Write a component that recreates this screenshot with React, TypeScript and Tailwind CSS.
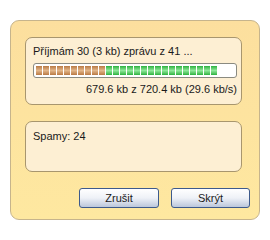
import React from 'react';

const SEGMENTS = 26;
const DONE = 10;
const GREEN = 16;

const ProgressBar: React.FC = () => (
  <div className="h-[15px] rounded-[3px] border border-[#8a8a80] bg-white p-[2px] flex gap-[1px]">
    {Array.from({ length: SEGMENTS }).map((_, i) => (
      <div
        key={i}
        className={
          i < DONE
            ? 'w-[6px] h-full bg-gradient-to-b from-[#b97a44] via-[#e2b68a] to-[#b97a44]'
            : i < DONE + GREEN
            ? 'w-[6px] h-full bg-gradient-to-b from-[#26b23e] via-[#8ee89a] to-[#26b23e]'
            : 'w-[6px] h-full'
        }
      />
    ))}
  </div>
);

export default function App() {
  return (
    <div
      className="w-[270px] h-[240px] bg-white pt-[20px] pl-[10px] text-[#1a1a1a] text-[11px]"
      style={{ fontFamily: '"Liberation Sans", Arial, sans-serif' }}
    >
      <div className="w-[250px] h-[200px] rounded-[9px] border border-[#c6b48c] bg-gradient-to-b from-[#fcdf9e] to-[#fee8a0] pt-[16px] pl-[14px] pr-[17px]">
        {/* Progress box */}
        <div className="h-[68px] rounded-[7px] border border-[#a8966e] bg-[#fdefd3] pt-[5px] pl-[7px] pr-[4px]">
          <div className="leading-[16px]">Příjmám 30 (3 kb) zprávu z 41 ...</div>
          <div className="mt-[4px]">
            <ProgressBar />
          </div>
          <div className="text-right leading-[16px] mt-[3px]">679.6 kb z 720.4 kb (29.6 kb/s)</div>
        </div>

        {/* Spam box */}
        <div className="mt-[16px] h-[51px] rounded-[7px] border border-[#a8966e] bg-[#fdefd3] pt-[6px] pl-[7px]">
          <div className="leading-[16px]">Spamy: 24</div>
        </div>

        {/* Buttons */}
        <div className="mt-[16px] flex justify-end gap-[12px] -mr-[8px]">
          <button className="w-[80px] h-[20px] rounded-[3px] border border-[#3d5a8c] bg-gradient-to-b from-white via-[#eef1f7] to-[#bcc7db] text-[11px] leading-none">
            Zrušit
          </button>
          <button className="w-[79px] h-[20px] rounded-[3px] border border-[#3d5a8c] bg-gradient-to-b from-white via-[#eef1f7] to-[#bcc7db] text-[11px] leading-none">
            Skrýt
          </button>
        </div>
      </div>
    </div>
  );
}
